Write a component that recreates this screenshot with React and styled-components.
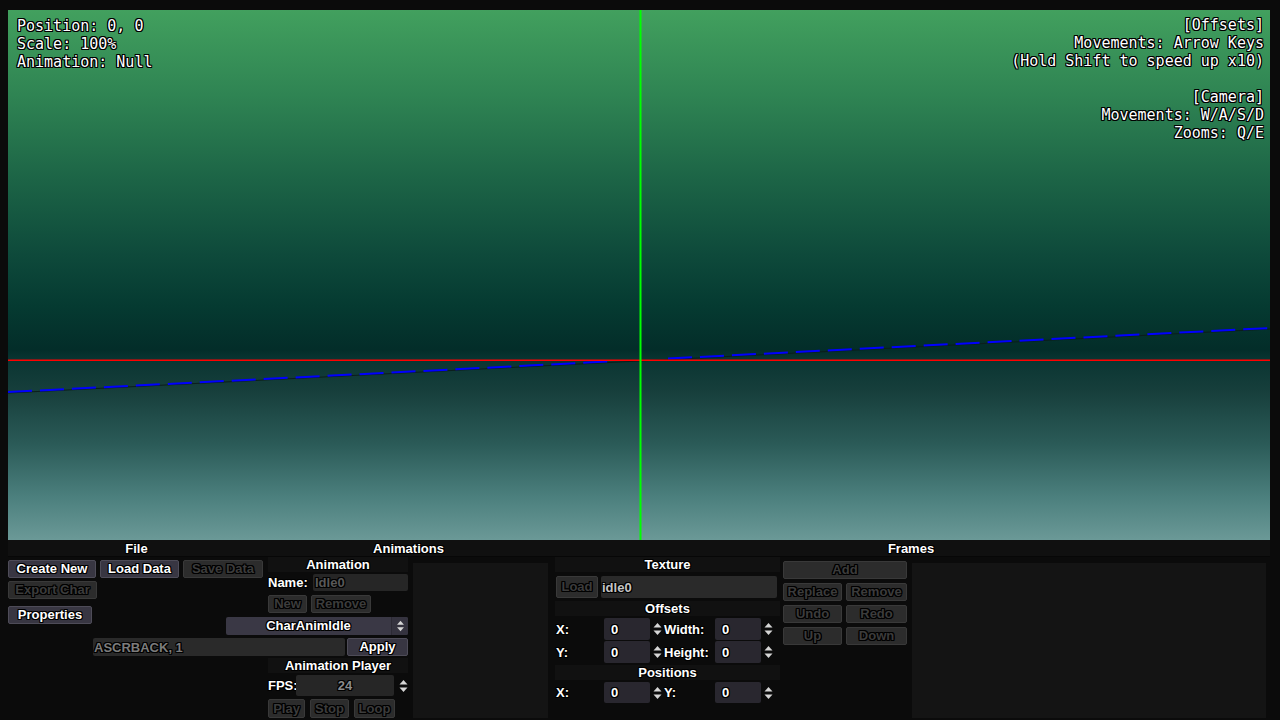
import React from "react";
import styled, { createGlobalStyle, css } from "styled-components";

const GlobalStyle = createGlobalStyle`
  html, body {
    margin: 0;
    padding: 0;
    background: #0b0b0b;
  }
  body {
    font-family: "Liberation Sans", Arial, sans-serif;
  }
`;

// black pixel outline used by every label in the editor
const outline = css`
  text-shadow: -1px -1px 0 #000, 0 -1px 0 #000, 1px -1px 0 #000, -1px 0 0 #000,
    1px 0 0 #000, -1px 1px 0 #000, 0 1px 0 #000, 1px 1px 0 #000;
`;

const uiText = css`
  font-family: "Liberation Sans", Arial, sans-serif;
  font-weight: 700;
  font-size: 13px;
  ${outline}
`;

const VW = 1262;
const VH = 530;

const Screen = styled.div`
  width: 1280px;
  height: 720px;
  background: #0b0b0b;
  display: flex;
  flex-direction: column;
  overflow: hidden;
`;

const Viewport = styled.div`
  position: relative;
  margin: 10px 10px 0 8px;
  height: ${VH}px;
  overflow: hidden;
  background: linear-gradient(
    to bottom,
    #42a05e 0%,
    #2f8453 16%,
    #1c6446 32%,
    #0e4a3b 46%,
    #053a31 56%,
    #032d29 64%,
    #0a3532 66%,
    #173f3c 72%,
    #2b5b58 82%,
    #4c807e 92%,
    #6b9997 100%
  );
`;

const Guides = styled.svg`
  position: absolute;
  inset: 0;
`;

const Hud = styled.div`
  position: absolute;
  top: ${(p) => p.$top}px;
  ${(p) => (p.$right ? "right: 6px;" : "left: 9px;")}
  text-align: ${(p) => (p.$right ? "right" : "left")};
  white-space: pre;
  font-family: "DejaVu Sans Mono", "Liberation Mono", monospace;
  font-size: 15px;
  line-height: 18px;
  color: #ffffff;
  ${outline}
`;

const Dock = styled.div`
  display: flex;
  height: 180px;
  margin: 0 10px 0 8px;
`;

const Panel = styled.div`
  display: flex;
  flex-direction: column;
  width: ${(p) => (p.$w ? `${p.$w}px` : "auto")};
  flex: ${(p) => (p.$w ? "none" : "1")};
  min-width: 0;
`;

const PanelHeader = styled.div`
  height: 16px;
  line-height: 18px;
  background: #101010;
  border-bottom: 1px solid #070707;
  text-align: center;
  color: #fff;
  ${uiText}
`;

const Body = styled.div`
  display: flex;
  flex: 1;
  min-height: 0;
`;

const Column = styled.div`
  display: flex;
  flex-direction: column;
  align-items: flex-start;
  width: ${(p) => p.$w}px;
  flex: none;
  padding: ${(p) => p.$pad || "0"};
  box-sizing: border-box;
`;

const Row = styled.div`
  display: flex;
  align-items: center;
  gap: ${(p) => p.$gap ?? 4}px;
  margin-top: ${(p) => p.$mt ?? 0}px;
  margin-left: ${(p) => p.$ml ?? 0}px;
  height: ${(p) => p.$h ?? 18}px;
  ${(p) =>
    p.$end &&
    css`
      align-self: flex-end;
      margin-right: 2px;
    `}
`;

const Button = styled.div`
  width: ${(p) => p.$w}px;
  height: ${(p) => p.$h ?? 18}px;
  box-sizing: border-box;
  border-radius: 2px;
  border: 1px solid ${(p) => (p.$off ? "#393939" : "#4e4c58")};
  background: ${(p) => (p.$off ? "#2c2c2c" : "#383642")};
  color: ${(p) => (p.$off ? "#3c3c3c" : "#ffffff")};
  text-align: center;
  line-height: ${(p) => (p.$h ?? 18) - 2}px;
  white-space: nowrap;
  ${uiText}
`;

const SectionTitle = styled.div`
  align-self: stretch;
  height: 15px;
  line-height: 15px;
  margin: ${(p) => p.$mt ?? 0}px 2px 0 3px;
  background: #111111;
  text-align: center;
  color: #fff;
  ${uiText}
`;

const Label = styled.div`
  width: ${(p) => p.$w}px;
  flex: none;
  color: #fff;
  white-space: nowrap;
  ${uiText}
`;

const Field = styled.div`
  width: ${(p) => p.$w}px;
  height: 100%;
  box-sizing: border-box;
  border-radius: 2px;
  background: ${(p) => p.$bg || "#282828"};
  color: ${(p) => p.$fg || "#ffffff"};
  padding-left: ${(p) => p.$pl ?? 2}px;
  text-align: ${(p) => (p.$center ? "center" : "left")};
  display: flex;
  align-items: center;
  justify-content: ${(p) => (p.$center ? "center" : "flex-start")};
  white-space: nowrap;
  overflow: hidden;
  ${uiText}
`;

const Select = styled.div`
  display: flex;
  width: 182px;
  height: 18px;
  align-self: flex-end;
  margin: 4px 2px 0 0;
  border-radius: 2px;
  background: #3a3845;
  overflow: hidden;
`;

const SelectText = styled.div`
  flex: 1;
  text-align: center;
  line-height: 18px;
  color: #fff;
  ${uiText}
`;

const SelectArrow = styled.div`
  width: 16px;
  display: flex;
  align-items: center;
  justify-content: center;
  background: #35333f;
  border-left: 1px solid #2c2a34;
`;

const ArrowBox = styled.div`
  width: ${(p) => p.$w ?? 14}px;
  flex: none;
  display: flex;
  align-items: center;
  justify-content: center;
`;

const ListBox = styled.div`
  flex: 1;
  margin: 6px 4px 2px ${(p) => p.$ml ?? 3}px;
  background: #141414;
`;

const SpinGrid = styled.div`
  display: grid;
  grid-template-columns: 48px 46px 14px 51px 46px 14px;
  grid-auto-rows: ${(p) => p.$rh ?? 22}px;
  row-gap: 1px;
  align-items: center;
  margin: ${(p) => p.$mt ?? 0}px 0 0 4px;
`;

const FrameButtons = styled.div`
  display: flex;
  flex-direction: column;
  gap: 4px;
  width: 128px;
  flex: none;
  box-sizing: border-box;
  padding: 4px 0 0 1px;
`;

const Spin = ({ small }) => (
  <svg width="9" height={small ? 12 : 14} viewBox="0 0 9 14">
    <polygon points="0.5,5.5 4.5,1 8.5,5.5" fill="#d6d6d6" />
    <polygon points="0.5,8.5 4.5,13 8.5,8.5" fill="#d6d6d6" />
  </svg>
);

const SpinInput = ({ value }) => (
  <Field $w={46} $bg="#29272f" $pl={7}>
    {value}
  </Field>
);

const Dash = ({ x1, x2 }) => {
  const y = (x) => 382 - (64 * x) / VW;
  return (
    <line
      x1={x1}
      y1={y(x1)}
      x2={x2}
      y2={y(x2)}
      stroke="#0000ff"
      strokeWidth="2"
      strokeDasharray="24 8"
    />
  );
};

const App = () => {
  return (
    <>
      <GlobalStyle />
      <Screen>
        <Viewport>
          <Guides width={VW} height={VH}>
            <line x1="0" y1="383" x2={VW} y2="319" stroke="#0c1e1c" strokeWidth="1" />
            <Dash x1={0} x2={604} />
            <Dash x1={660} x2={VW} />
            <rect x="0" y="349.5" width={VW} height="1.5" fill="#ff0000" />
            <rect x="631.5" y="0" width="2" height={VH} fill="#00ff00" />
          </Guides>
          <Hud $top={7}>{"Position: 0, 0\nScale: 100%\nAnimation: Null"}</Hud>
          <Hud $top={6} $right>
            {
              "[Offsets]\nMovements: Arrow Keys\n(Hold Shift to speed up x10)\n\n[Camera]\nMovements: W/A/S/D\nZooms: Q/E"
            }
          </Hud>
        </Viewport>

        <Dock>
          <Panel $w={257}>
            <PanelHeader>File</PanelHeader>
            <Column $w={257} $pad="3px 0 0 0">
              <Row $gap={4}>
                <Button $w={88}>Create New</Button>
                <Button $w={79}>Load Data</Button>
                <Button $w={80} $off>
                  Save Data
                </Button>
              </Row>
              <Row $mt={3}>
                <Button $w={89} $off>
                  Export Char
                </Button>
              </Row>
              <Row $mt={7}>
                <Button $w={84}>Properties</Button>
              </Row>
            </Column>
          </Panel>

          <Panel $w={287}>
            <PanelHeader>Animations</PanelHeader>
            <Body>
              <Column $w={145}>
                <SectionTitle $mt={0}>Animation</SectionTitle>
                <Row $mt={2} $ml={3} $h={17} $gap={0}>
                  <Label $w={45}>Name:</Label>
                  <Field $w={95} $bg="#262626" $fg="#595959">
                    Idle0
                  </Field>
                </Row>
                <Row $mt={4} $ml={3}>
                  <Button $w={39} $off>
                    New
                  </Button>
                  <Button $w={60} $off>
                    Remove
                  </Button>
                </Row>
                <Select>
                  <SelectText>CharAnimIdle</SelectText>
                  <SelectArrow>
                    <Spin small />
                  </SelectArrow>
                </Select>
                <Row $mt={3} $gap={2} $end>
                  <Field $w={252} $bg="#2a2a2a" $fg="#7c7c7c" $pl={1}>
                    ASCRBACK, 1
                  </Field>
                  <Button $w={61}>Apply</Button>
                </Row>
                <SectionTitle $mt={2}>Animation Player</SectionTitle>
                <Row $mt={2} $ml={3} $h={21} $gap={0}>
                  <Label $w={28}>FPS:</Label>
                  <Field $w={98} $bg="#262626" $fg="#8a8a8a" $center $pl={0}>
                    24
                  </Field>
                  <ArrowBox $w={18}>
                    <Spin />
                  </ArrowBox>
                </Row>
                <Row $mt={3} $ml={3} $h={19} $gap={5}>
                  <Button $w={37} $h={19} $off>
                    Play
                  </Button>
                  <Button $w={39} $h={19} $off>
                    Stop
                  </Button>
                  <Button $w={41} $h={19} $off>
                    Loop
                  </Button>
                </Row>
              </Column>
              <ListBox />
            </Body>
          </Panel>

          <Panel>
            <PanelHeader>Frames</PanelHeader>
            <Body>
              <Column $w={230}>
                <SectionTitle $mt={0}>Texture</SectionTitle>
                <Row $mt={4} $ml={4} $h={22} $gap={3}>
                  <Button $w={42} $h={22} $off>
                    Load
                  </Button>
                  <Field $w={176} $bg="#2a2a2a" $fg="#c4c4c4" $pl={1}>
                    idle0
                  </Field>
                </Row>
                <SectionTitle $mt={3}>Offsets</SectionTitle>
                <SpinGrid $mt={2}>
                  <Label>X:</Label>
                  <SpinInput value="0" />
                  <ArrowBox>
                    <Spin />
                  </ArrowBox>
                  <Label>Width:</Label>
                  <SpinInput value="0" />
                  <ArrowBox>
                    <Spin />
                  </ArrowBox>
                  <Label>Y:</Label>
                  <SpinInput value="0" />
                  <ArrowBox>
                    <Spin />
                  </ArrowBox>
                  <Label>Height:</Label>
                  <SpinInput value="0" />
                  <ArrowBox>
                    <Spin />
                  </ArrowBox>
                </SpinGrid>
                <SectionTitle $mt={2}>Positions</SectionTitle>
                <SpinGrid $mt={2} $rh={21}>
                  <Label>X:</Label>
                  <SpinInput value="0" />
                  <ArrowBox>
                    <Spin />
                  </ArrowBox>
                  <Label>Y:</Label>
                  <SpinInput value="0" />
                  <ArrowBox>
                    <Spin />
                  </ArrowBox>
                </SpinGrid>
              </Column>
              <FrameButtons>
                <Button $w={124} $off>
                  Add
                </Button>
                <Row>
                  <Button $w={59} $off>
                    Replace
                  </Button>
                  <Button $w={61} $off>
                    Remove
                  </Button>
                </Row>
                <Row>
                  <Button $w={59} $off>
                    Undo
                  </Button>
                  <Button $w={61} $off>
                    Redo
                  </Button>
                </Row>
                <Row>
                  <Button $w={59} $off>
                    Up
                  </Button>
                  <Button $w={61} $off>
                    Down
                  </Button>
                </Row>
              </FrameButtons>
              <ListBox $ml={2} />
            </Body>
          </Panel>
        </Dock>
      </Screen>
    </>
  );
};

export default App;
